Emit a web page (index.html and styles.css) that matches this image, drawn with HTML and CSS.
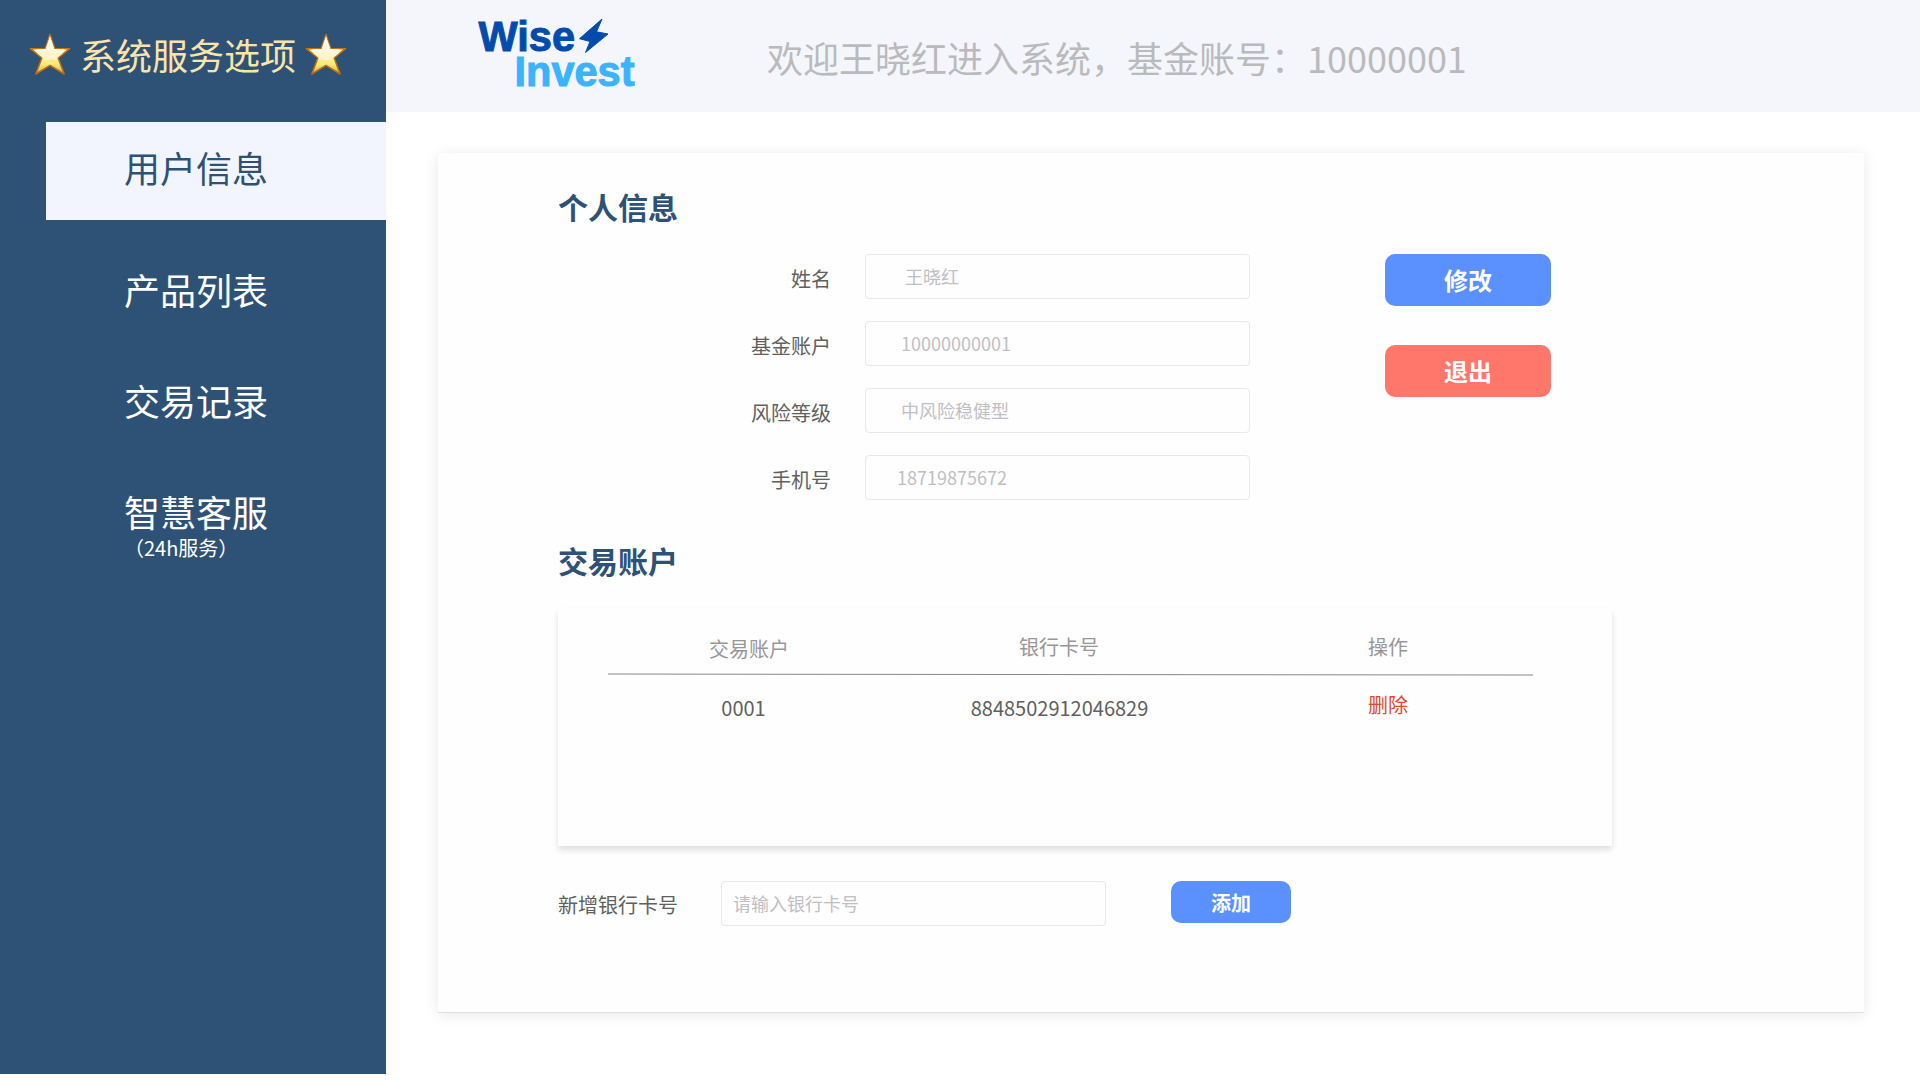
FILE: index.html
```html
<!DOCTYPE html>
<html lang="zh-CN">
<head>
<meta charset="utf-8">
<title>Wise Invest</title>
<link rel="stylesheet" href="styles.css">
</head>
<body>
<svg width="0" height="0" class="defs" aria-hidden="true">
  <defs>
    <linearGradient id="starFill" x1="0" y1="0" x2="0" y2="1">
      <stop offset="0" stop-color="#fffbe8"/>
      <stop offset="0.5" stop-color="#fdf3a0"/>
      <stop offset="0.75" stop-color="#faeb7a"/>
      <stop offset="1" stop-color="#dba93c"/>
    </linearGradient>
    <linearGradient id="starEdge" x1="0" y1="0" x2="0" y2="1">
      <stop offset="0" stop-color="#c9720f"/>
      <stop offset="1" stop-color="#b96d12"/>
    </linearGradient>
    <linearGradient id="starShine" x1="0" y1="0" x2="0" y2="1">
      <stop offset="0" stop-color="#ffffff"/>
      <stop offset="1" stop-color="#fff3c0"/>
    </linearGradient>
    <clipPath id="starClip"><path d="M21 3 L25.4 16 L39.4 16.3 L28.3 24.7 L34.2 40.4 L21 31.6 L7.8 40.4 L13.7 24.7 L2.6 16.3 L16.6 16 Z"/></clipPath>
    <symbol id="star" viewBox="0 0 42 42">
      <path d="M21 1.5 L25.7 15.4 L40.6 15.7 L29 24.8 L35.2 41 L21 32.4 L6.8 41 L13 24.8 L1.4 15.7 L16.3 15.4 Z" fill="url(#starFill)" stroke="url(#starEdge)" stroke-width="1.5" stroke-linejoin="round"/>
      <ellipse cx="21" cy="15" rx="14" ry="12.2" fill="url(#starShine)" clip-path="url(#starClip)"/>
    </symbol>
  </defs>
</svg>
<div class="app">
  <aside class="sidebar">
    <div class="brand">
      <svg class="star"><use href="#star"/></svg>
      <span class="brand-text">系统服务选项</span>
      <svg class="star"><use href="#star"/></svg>
    </div>
    <nav class="nav">
      <a class="nav-item active">用户信息</a>
      <a class="nav-item">产品列表</a>
      <a class="nav-item">交易记录</a>
      <a class="nav-item service">智慧客服<small class="hours">（24h服务）</small></a>
    </nav>
  </aside>
  <div class="main">
    <header class="header">
      <svg class="logo" width="170" height="80" viewBox="0 0 170 80">
        <text class="logo-wise" x="2.5" y="41" textLength="96.5" lengthAdjust="spacingAndGlyphs">Wise</text>
        <path d="M126 9 L103.5 28.7 L114 31.5 L109.5 42.5 L132 24 L120.5 21.8 Z" fill="#044bae" stroke="#044bae" stroke-width="1" stroke-linejoin="round"/>
        <text class="logo-invest" x="38.5" y="76" textLength="120" lengthAdjust="spacingAndGlyphs">Invest</text>
      </svg>
      <div class="welcome">欢迎王晓红进入系统，基金账号：10000001</div>
    </header>
    <main class="card">
      <h2 class="section-title">个人信息</h2>
      <div class="profile">
        <div class="fields">
          <label class="label">姓名</label><div class="input name">王晓红</div>
          <label class="label">基金账户</label><div class="input account">10000000001</div>
          <label class="label">风险等级</label><div class="input risk">中风险稳健型</div>
          <label class="label">手机号</label><div class="input phone">18719875672</div>
        </div>
        <div class="actions">
          <button class="btn btn-large">修改</button>
          <button class="btn btn-large btn-danger">退出</button>
        </div>
      </div>
      <h2 class="section-title accounts-title">交易账户</h2>
      <section class="table">
        <div class="row head">
          <span class="col-account">交易账户</span><span class="col-card">银行卡号</span><span class="col-op">操作</span>
        </div>
        <div class="rule"></div>
        <div class="row body">
          <span class="col-account">0001</span><span class="col-card">8848502912046829</span><span class="col-op delete">删除</span>
        </div>
      </section>
      <div class="add-row">
        <label class="add-label">新增银行卡号</label>
        <div class="input add-input">请输入银行卡号</div>
        <button class="btn btn-add">添加</button>
      </div>
    </main>
  </div>
</div>
</body>
</html>
```
FILE: styles.css
```css
* { box-sizing: border-box; }

body {
  margin: 0;
  height: 1080px;
  overflow: hidden;
  background: #fff;
  font-family: "Noto Sans CJK SC", sans-serif;
  font-size: 20px;
  color: #606060;
}

.defs { display: block; height: 0; }
.app { display: flex; height: 1074px; }

/* Sidebar */
.sidebar {
  width: 386px;
  flex: none;
  background: #2e5176;
}
.brand {
  display: flex;
  height: 122px;
  padding: 33px 0 0 29px;
  color: #fce4a8;
}
.star { width: 42px; height: 42px; }
.brand-text {
  width: 216px;
  margin: 0 9px 0 9px;
  font-size: 36px;
  line-height: 42px;
  white-space: nowrap;
}
.nav { display: flex; flex-direction: column; }
.nav-item {
  height: 110px;
  padding-left: 124px;
  font-size: 36px;
  line-height: 110px;
  color: #fff;
  white-space: nowrap;
}
.nav-item.active {
  height: 98px;
  margin: 0 0 14px 46px;
  padding-left: 78px;
  line-height: 90px;
  color: #2e5176;
  background: #f2f5fd;
}
.nav-item + .nav-item + .nav-item { margin-top: 1px; }
.nav-item.service { display: flex; flex-direction: column; margin-top: 0; }
.hours {
  margin-top: -33px;
  font-size: 20px;
  line-height: 30px;
}

/* Header */
.main { flex: 1; }
.header {
  display: flex;
  height: 112px;
  padding: 10px 0 0 90px;
  background: #f5f6fb;
}
.logo { flex: none; }
.logo text {
  font-family: "Liberation Sans", Arial, sans-serif;
  font-weight: 700;
  font-size: 42px;
  stroke-width: 1;
}
.logo-wise { fill: #044bae; stroke: #044bae; }
.logo-invest { fill: #3bb3ff; stroke: #3bb3ff; }
.welcome {
  margin-left: 121px;
  font-size: 36px;
  line-height: 95px;
  color: #bababd;
  white-space: nowrap;
}

/* Content card */
.card {
  width: 1426px;
  height: 860px;
  margin: 41px 0 0 52px;
  padding: 31px 0 0 120px;
  border-bottom: 1px solid #dfdfdf;
  background: #fefefe;
  box-shadow: 0 2px 14px rgba(0, 0, 0, 0.09);
}
.section-title {
  margin: 0;
  font-size: 30px;
  font-weight: 700;
  line-height: 44px;
  color: #2e5176;
}
.profile { display: flex; margin-top: 26px; }
.fields {
  display: grid;
  grid-template-columns: 273px 385px;
  column-gap: 34px;
  row-gap: 22px;
}
.label { text-align: right; line-height: 50px; height: 45px; }
.input {
  height: 45px;
  border: 1px solid #e8e8ea;
  border-radius: 4px;
  font-size: 18px;
  line-height: 42px;
  color: #c0c0c4;
}
.name { padding-left: 39px; }
.account { padding-left: 35px; }
.risk { padding-left: 35px; }
.phone { padding-left: 31px; }
.actions {
  display: flex;
  flex-direction: column;
  gap: 39px;
  margin-left: 135px;
}
.btn {
  padding: 0;
  border: 0;
  border-radius: 10px;
  font-family: inherit;
  font-weight: 700;
  color: #fff;
  background: #5b91ff;
}
.btn-large { width: 166px; height: 52px; font-size: 24px; line-height: 52px; }
.btn-danger { background: #ff776a; }
.accounts-title { margin-top: 38px; }

/* Accounts table */
.table {
  width: 1054px;
  height: 238px;
  margin-top: 26px;
  padding: 24px 79px 0 50px;
  background: #fefefe;
  box-shadow: 0 4px 6px rgba(0, 0, 0, 0.12);
}
.row { display: grid; grid-template-columns: 280px 342px 303px; text-align: center; }
.head { height: 42px; line-height: 30px; color: #97979a; }
.head .col-account { padding: 2px 0 0 2px; }
.col-op { padding-left: 13px; }
.rule {
  height: 1.4px;
  background: #88888b;
  transform: rotate(0.06deg);
}
.body { padding-top: 15px; line-height: 36px; }
.body .col-account { padding-right: 9px; }
.body .col-card { padding-left: 1px; }
.delete { line-height: 29px; color: #e4472b; }

.add-row { display: flex; margin-top: 35px; }
.add-label { width: 163px; line-height: 48px; }
.add-input { width: 385px; padding-left: 11px; line-height: 43px; }
.btn-add { width: 120px; height: 42px; padding-top: 1px; margin-left: 65px; font-size: 20px; line-height: 41px; }
```
